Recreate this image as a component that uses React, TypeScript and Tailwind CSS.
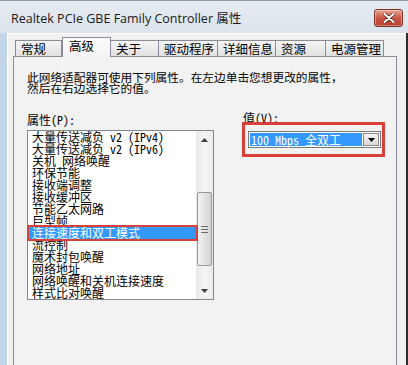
import React from "react";

const items = [
  "大量传送减负 v2 (IPv4)",
  "大量传送减负 v2 (IPv6)",
  "关机 网络唤醒",
  "环保节能",
  "接收端调整",
  "接收缓冲区",
  "节能乙太网路",
  "巨型帧",
  "连接速度和双工模式",
  "流控制",
  "魔术封包唤醒",
  "网络地址",
  "网络唤醒和关机连接速度",
  "样式比对唤醒",
];

const tabs: { label: string; w: string; sel?: boolean }[] = [
  { label: "常规", w: "w-[47px]" },
  { label: "高级", w: "w-[49px]", sel: true },
  { label: "关于", w: "w-[48px]" },
  { label: "驱动程序", w: "w-[59px]" },
  { label: "详细信息", w: "w-[58px]" },
  { label: "资源", w: "w-[50px]" },
  { label: "电源管理", w: "w-[58px]" },
];

function TabItem({ label, w, sel }: { label: string; w: string; sel?: boolean }) {
  if (sel) {
    return (
      <div
        className={`${w} h-[20px] -mb-px relative z-10 flex items-center pl-[6px] pb-[3px] border-l border-t border-r border-[#898c95] bg-gradient-to-b from-[#fdfdfd] to-[#f3f3f3] text-[12.5px] leading-[14px] text-black`}
      >
        {label}
      </div>
    );
  }
  return (
    <div
      className={`${w} h-[16px] flex items-center pl-[5px] pt-[1px] border-t border-r border-[#898c95] first:border-l bg-gradient-to-b from-[#f4f4f4] to-[#e1e1e1] text-[12.5px] leading-[14px] text-black`}
    >
      {label}
    </div>
  );
}

function Arrow({ dir }: { dir: "up" | "down" }) {
  return (
    <svg width="7" height="4" viewBox="0 0 7 4">
      {dir === "up" ? (
        <path d="M0 4 L3.5 0 L7 4 Z" fill="#3c3c3c" />
      ) : (
        <path d="M0 0 L3.5 4 L7 0 Z" fill="#3c3c3c" />
      )}
    </svg>
  );
}

export default function App() {
  return (
    <div className="w-[408px] h-[365px] overflow-hidden flex flex-col bg-[#d6e0eb] font-['Noto_Sans_CJK_SC',sans-serif]">
      {/* title bar */}
      <div className="h-[33px] shrink-0 flex items-start border-t border-[#8d99a8] bg-gradient-to-b from-[#e6ebf1] to-[#dbe3ec]">
        <div className="pl-[11px] pt-[10px] text-[12.5px] leading-[16px] text-[#1b1b1b] font-['Open_Sans','Noto_Sans_CJK_SC',sans-serif] whitespace-nowrap">
          Realtek PCIe GBE Family Controller 属性
        </div>
        <div className="ml-auto mt-[8px] mr-[5px] w-[29px] h-[18px] rounded-[3px] border border-[#7b3328] bg-gradient-to-b from-[#e6a493] via-[#c9584a] to-[#b8402f] flex items-center justify-center shadow-[inset_0_0_0_1px_rgba(255,255,255,0.35)]">
          <svg width="12" height="10" viewBox="0 0 12 10">
            <path d="M1.5 1 L10.5 9 M10.5 1 L1.5 9" stroke="#5a1a12" strokeWidth="3.6" strokeLinecap="round" />
            <path d="M1.5 1 L10.5 9 M10.5 1 L1.5 9" stroke="#ffffff" strokeWidth="2.2" strokeLinecap="round" />
          </svg>
        </div>
      </div>

      {/* body */}
      <div className="flex-1 flex min-h-0">
        <div className="w-[7px] shrink-0 bg-[#c5d5e9]" />
        <div className="flex-1 min-w-0 flex flex-col bg-[#f0f0f0] border-l border-t border-white pl-[5px] pr-[9px] pt-[3px]">
          {/* tabs */}
          <div className="h-[19px] shrink-0 flex items-end pl-[2px]">
            {tabs.map((t) => (
              <TabItem key={t.label} {...t} />
            ))}
          </div>

          {/* panel */}
          <div className="flex-1 border border-b-0 border-[#898c95] bg-[#f2f2f2] pl-[13px] pt-[14px]">
            <div className="text-[11.7px] leading-[11px] text-black whitespace-nowrap">
              <div>此网络适配器可使用下列属性。在左边单击您想更改的属性，</div>
              <div>然后在右边选择它的值。</div>
            </div>

            <div className="mt-[19px] flex gap-[29px]">
              {/* left column */}
              <div className="w-[187px] shrink-0 pt-[2px]">
                <div className="text-[12px] leading-[12px] text-black font-['Noto_Sans_Mono_CJK_SC','Noto_Sans_CJK_SC',monospace]">
                  属性(P):
                </div>
                <div className="mt-[4px] h-[170px] border border-[#828790] bg-white flex">
                  <div className="flex-1 min-w-0 flex flex-col text-[12px] leading-[12px] text-black font-['Noto_Sans_Mono_CJK_SC','Noto_Sans_CJK_SC',monospace]">
                    {items.map((it, i) =>
                      i === 8 ? (
                        <div
                          key={it}
                          className="h-[12px] shrink-0 ml-[1px] pl-[3px] whitespace-nowrap bg-[#3399ff] text-white ring-2 ring-[#d8403a] relative"
                        >
                          {it}
                        </div>
                      ) : (
                        <div key={it} className="h-[12px] shrink-0 ml-[1px] pl-[3px] whitespace-nowrap">
                          {it}
                        </div>
                      )
                    )}
                  </div>
                  {/* scrollbar */}
                  <div className="w-[17px] shrink-0 flex flex-col bg-gradient-to-r from-[#e9e9e9] via-[#f5f5f5] to-[#eaeaea]">
                    <div className="h-[17px] shrink-0 flex items-center justify-center">
                      <Arrow dir="up" />
                    </div>
                    <div className="h-[44px] shrink-0" />
                    <div className="h-[74px] shrink-0 mx-[1px] rounded-[2px] border border-[#979797] bg-gradient-to-r from-[#f3f3f3] via-[#e4e4e4] to-[#d2d2d2] flex flex-col items-center justify-center gap-[2px]">
                      <div className="w-[7px] h-px bg-[#6b6b6b]" />
                      <div className="w-[7px] h-px bg-[#6b6b6b]" />
                      <div className="w-[7px] h-px bg-[#6b6b6b]" />
                    </div>
                    <div className="flex-1" />
                    <div className="h-[17px] shrink-0 flex items-center justify-center">
                      <Arrow dir="down" />
                    </div>
                  </div>
                </div>
              </div>

              {/* right column */}
              <div className="flex flex-col">
                <div className="text-[12px] leading-[12px] text-black font-['Noto_Sans_Mono_CJK_SC','Noto_Sans_CJK_SC',monospace]">
                  值(V):
                </div>
                <div className="mt-[7px] ml-[5px] w-[133px] h-[17px] relative border border-[#7a7a7a] bg-white flex p-px">
                  <div className="flex-1 bg-[#3399ff] text-white text-[12px] leading-[13px] pl-[1px] whitespace-nowrap font-['Noto_Sans_Mono_CJK_SC','Noto_Sans_CJK_SC',monospace]">
                    100 Mbps 全双工
                  </div>
                  <div className="w-[16px] ml-px border border-[#8a8a8a] bg-gradient-to-b from-[#f6f6f6] to-[#d9d9d9] flex items-center justify-center">
                    <svg width="7" height="4" viewBox="0 0 7 4">
                      <path d="M0 0 L3.5 4 L7 0 Z" fill="#000" />
                    </svg>
                  </div>
                  <div className="absolute -left-[7px] -top-[10px] -right-[5px] -bottom-[10px] border-[3px] border-[#d8403a] pointer-events-none" />
                </div>
              </div>
            </div>
          </div>
        </div>
        <div className="w-[2px] shrink-0 bg-[#2b2b2b]" />
      </div>
    </div>
  );
}
